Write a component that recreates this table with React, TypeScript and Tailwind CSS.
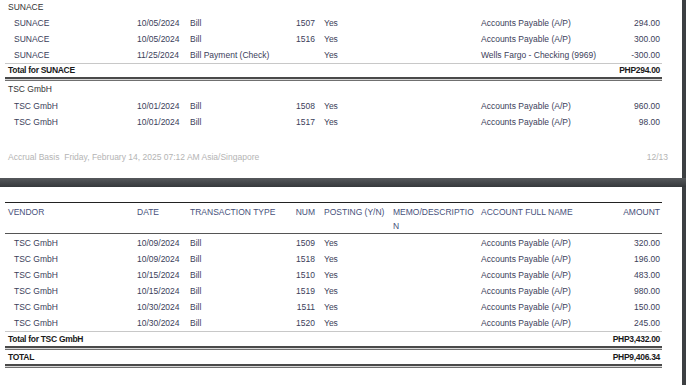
const font = { fontFamily: '"Liberation Sans", Arial, sans-serif' };

type Row = {
  vendor: string;
  date: string;
  type: string;
  num: string;
  posting: string;
  account: string;
  amount: string;
};

const sunace: Row[] = [
  { vendor: "SUNACE", date: "10/05/2024", type: "Bill", num: "1507", posting: "Yes", account: "Accounts Payable (A/P)", amount: "294.00" },
  { vendor: "SUNACE", date: "10/05/2024", type: "Bill", num: "1516", posting: "Yes", account: "Accounts Payable (A/P)", amount: "300.00" },
  { vendor: "SUNACE", date: "11/25/2024", type: "Bill Payment (Check)", num: "", posting: "Yes", account: "Wells Fargo - Checking (9969)", amount: "-300.00" },
];

const tscTop: Row[] = [
  { vendor: "TSC GmbH", date: "10/01/2024", type: "Bill", num: "1508", posting: "Yes", account: "Accounts Payable (A/P)", amount: "960.00" },
  { vendor: "TSC GmbH", date: "10/01/2024", type: "Bill", num: "1517", posting: "Yes", account: "Accounts Payable (A/P)", amount: "98.00" },
];

const tscBottom: Row[] = [
  { vendor: "TSC GmbH", date: "10/09/2024", type: "Bill", num: "1509", posting: "Yes", account: "Accounts Payable (A/P)", amount: "320.00" },
  { vendor: "TSC GmbH", date: "10/09/2024", type: "Bill", num: "1518", posting: "Yes", account: "Accounts Payable (A/P)", amount: "196.00" },
  { vendor: "TSC GmbH", date: "10/15/2024", type: "Bill", num: "1510", posting: "Yes", account: "Accounts Payable (A/P)", amount: "483.00" },
  { vendor: "TSC GmbH", date: "10/15/2024", type: "Bill", num: "1519", posting: "Yes", account: "Accounts Payable (A/P)", amount: "980.00" },
  { vendor: "TSC GmbH", date: "10/30/2024", type: "Bill", num: "1511", posting: "Yes", account: "Accounts Payable (A/P)", amount: "150.00" },
  { vendor: "TSC GmbH", date: "10/30/2024", type: "Bill", num: "1520", posting: "Yes", account: "Accounts Payable (A/P)", amount: "245.00" },
];

function DataRow({ r }: { r: Row }) {
  return (
    <div className="flex h-[16px] items-center whitespace-nowrap text-[#3b3e5a]">
      <div className="w-[128px] pl-[9px]">{r.vendor}</div>
      <div className="w-[53px] pl-[4px]">{r.date}</div>
      <div className="w-[89px] pl-[4px]">{r.type}</div>
      <div className="w-[44px] pr-[4px] text-right">{r.num}</div>
      <div className="w-[70px] pl-[5px]">{r.posting}</div>
      <div className="w-[88px] pl-[4px]"></div>
      <div className="w-[123px] pl-[4px]">{r.account}</div>
      <div className="w-[62px] pr-[2px] text-right">{r.amount}</div>
    </div>
  );
}

function GroupHeader({ name, h }: { name: string; h: string }) {
  return <div className={`flex items-center pl-[3px] text-[#333] ${h}`}>{name}</div>;
}

function DoubleLine() {
  return (
    <div className="flex flex-col">
      <div className="h-[2px] bg-[#4a4a4a]" />
      <div className="h-[1px] bg-[#d8d8d8]" />
      <div className="h-[1px] bg-[#707070]" />
    </div>
  );
}

function TotalRow({ label, amount, h }: { label: string; amount: string; h: string }) {
  return (
    <div className={`flex items-center justify-between font-bold tracking-[-0.3px] text-[#1a1a1a] ${h}`}>
      <span className="pl-[3px]">{label}</span>
      <span className="pr-[2px]">{amount}</span>
    </div>
  );
}

export default function App() {
  return (
    <div className="flex h-[385px] flex-col overflow-hidden bg-[#3d4043] text-[8.5px]" style={font}>
      {/* page 12 (bottom part) */}
      <div className="mr-[4px] flex h-[178px] flex-col bg-white">
        <div className="ml-[5px] w-[657px]">
          <GroupHeader name="SUNACE" h="h-[15px]" />
          {sunace.map((r, i) => (
            <DataRow key={i} r={r} />
          ))}
          <div className="h-[1px] bg-[#c8c8c8]" />
          <TotalRow label="Total for SUNACE" amount="PHP294.00" h="h-[13px]" />
          <DoubleLine />
          <GroupHeader name="TSC GmbH" h="h-[17px]" />
          {tscTop.map((r, i) => (
            <DataRow key={i} r={r} />
          ))}
        </div>
        <div className="mt-auto mb-[13px] flex h-[16px] items-center justify-between pl-[8px] pr-[14px] text-[#b4b4b4]">
          <span>Accrual Basis&nbsp; Friday, February 14, 2025 07:12 AM Asia/Singapore</span>
          <span>12/13</span>
        </div>
      </div>

      {/* gap between pages */}
      <div className="h-[9px] bg-gradient-to-b from-[#55585b] to-[#36393c]" />

      {/* page 13 */}
      <div className="mr-[4px] flex-1 bg-white pt-[15px]">
        <div className="ml-[5px] w-[657px]">
          <div className="h-[1px] bg-[#222]" />
          <div className="flex pt-[2px] leading-[14px] whitespace-nowrap text-[#46507a]">
            <div className="w-[128px] pl-[3px]">VENDOR</div>
            <div className="w-[53px] pl-[4px]">DATE</div>
            <div className="w-[89px] pl-[4px]">TRANSACTION TYPE</div>
            <div className="w-[44px] pr-[4px] text-right">NUM</div>
            <div className="w-[70px] pl-[5px]">POSTING (Y/N)</div>
            <div className="w-[88px] pl-[4px]">
              MEMO/DESCRIPTIO
              <br />N
            </div>
            <div className="w-[123px] pl-[4px]">ACCOUNT FULL NAME</div>
            <div className="w-[62px] pr-[2px] text-right">AMOUNT</div>
          </div>
          <div className="h-[1px] bg-[#555]" />
          <div className="mt-[1px]">
            {tscBottom.map((r, i) => (
              <DataRow key={i} r={r} />
            ))}
          </div>
          <div className="h-[1px] bg-[#c8c8c8]" />
          <TotalRow label="Total for TSC GmbH" amount="PHP3,432.00" h="h-[14px]" />
          <DoubleLine />
          <TotalRow label="TOTAL" amount="PHP9,406.34" h="h-[14px]" />
          <DoubleLine />
        </div>
      </div>
    </div>
  );
}
